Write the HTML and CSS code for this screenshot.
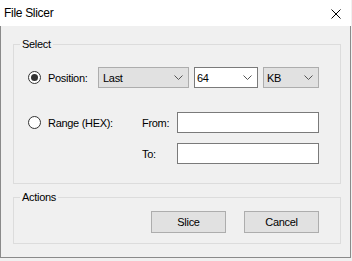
FILE: index.html
```html
<!DOCTYPE html>
<html lang="en">
<head>
    <meta charset="UTF-8">
    <title>File Slicer</title>
    <link rel="stylesheet" href="styles.css">
</head>
<body>
    <div class="window">
        <div class="titlebar">
            <span class="title">File Slicer</span>
            <svg class="close" width="10" height="10" viewBox="0 0 10 10">
                <path d="M0.5 0.5 L9.5 9.5 M9.5 0.5 L0.5 9.5" stroke="#000" stroke-width="1" fill="none"/>
            </svg>
        </div>
        <div class="client">
            <fieldset class="group">
                <legend>Select</legend>
                <div class="select-body">
                    <div class="row">
                        <span class="radio checked"></span>
                        <span class="radio-label">Position:</span>
                        <div class="combo last">
                            <span>Last</span>
                            <svg class="chevron" width="9" height="5" viewBox="0 0 9 5"><polyline points="0.5,0.5 4.5,4.5 8.5,0.5" fill="none" stroke="#555"/></svg>
                        </div>
                        <div class="combo size">
                            <span>64</span>
                            <svg class="chevron" width="9" height="5" viewBox="0 0 9 5"><polyline points="0.5,0.5 4.5,4.5 8.5,0.5" fill="none" stroke="#555"/></svg>
                        </div>
                        <div class="combo unit">
                            <span>KB</span>
                            <svg class="chevron" width="9" height="5" viewBox="0 0 9 5"><polyline points="0.5,0.5 4.5,4.5 8.5,0.5" fill="none" stroke="#555"/></svg>
                        </div>
                    </div>
                    <div class="range">
                        <div class="range-option">
                            <span class="radio"></span>
                            <span class="radio-label">Range (HEX):</span>
                        </div>
                        <span class="field-label">From:</span>
                        <div class="textbox"></div>
                        <span></span>
                        <span class="field-label">To:</span>
                        <div class="textbox"></div>
                    </div>
                </div>
            </fieldset>
            <fieldset class="group actions">
                <legend>Actions</legend>
                <div class="buttons">
                    <button class="btn">Slice</button>
                    <button class="btn">Cancel</button>
                </div>
            </fieldset>
        </div>
    </div>
</body>
</html>
```

FILE: styles.css
```css
body {
    margin: 0;
    background-color: #f0f0f0;
    font-family: "Liberation Sans", Arial, sans-serif;
    color: #000;
}
.window {
    width: 351px;
}
.titlebar {
    height: 26px;
    background-color: #fff;
    display: flex;
    align-items: center;
    justify-content: space-between;
    padding: 0 10px 0 4px;
    box-sizing: border-box;
    font-size: 12px;
    letter-spacing: -0.3px;
}
.close {
    display: block;
    margin-top: 2px;
}
.client {
    box-sizing: border-box;
    height: 232px;
    padding: 12px 9px 0 12px;
    border: 1px solid #8a8a8a;
    border-top: none;
    background-color: #f0f0f0;
    font-size: 11px;
    letter-spacing: -0.3px;
}
.group {
    margin: 0;
    padding: 0;
    min-width: 0;
    border: 1px solid #dcdcdc;
}
.group legend {
    margin-left: 6px;
    padding: 0 2px;
    line-height: 13px;
}
.select-body {
    padding: 16px 0 19px 14px;
}
.row {
    display: flex;
    align-items: center;
    height: 21px;
}
.radio {
    box-sizing: border-box;
    width: 13px;
    height: 13px;
    border: 1px solid #333;
    border-radius: 50%;
    display: flex;
    justify-content: center;
    align-items: center;
    background-color: #fff;
}
.radio.checked::after {
    content: "";
    width: 7px;
    height: 7px;
    border-radius: 50%;
    background-color: #333;
}
.radio-label {
    margin-left: 7px;
}
.row .radio-label {
    width: 50px;
}
.combo {
    box-sizing: border-box;
    height: 21px;
    display: flex;
    align-items: center;
    justify-content: space-between;
    border: 1px solid #adadad;
    background-color: #e1e1e1;
    padding: 0 5px 0 4px;
}
.combo.last {
    width: 91px;
}
.combo.size {
    width: 64px;
    margin-left: 5px;
    padding-left: 2px;
    background-color: #fff;
    border-color: #7a7a7a;
}
.combo.unit {
    width: 56px;
    margin-left: 5px;
    padding-left: 3px;
}
.chevron {
    display: block;
}
.range {
    display: grid;
    grid-template-columns: 114px 35px 142px;
    grid-template-rows: 21px 21px;
    row-gap: 10px;
    align-items: center;
    margin-top: 24px;
}
.range-option {
    display: flex;
    align-items: center;
}
.textbox {
    box-sizing: border-box;
    height: 21px;
    border: 1px solid #7a7a7a;
    background-color: #fff;
}
.actions {
    margin-top: 7px;
}
.buttons {
    display: flex;
    justify-content: flex-end;
    gap: 18px;
    padding: 7px 21px 10px 0;
}
.btn {
    box-sizing: border-box;
    width: 75px;
    height: 22px;
    padding: 0;
    border: 1px solid #adadad;
    border-radius: 0;
    background-color: #e1e1e1;
    font-family: "Liberation Sans", Arial, sans-serif;
    font-size: 11px;
    letter-spacing: -0.3px;
    color: #000;
}
```
